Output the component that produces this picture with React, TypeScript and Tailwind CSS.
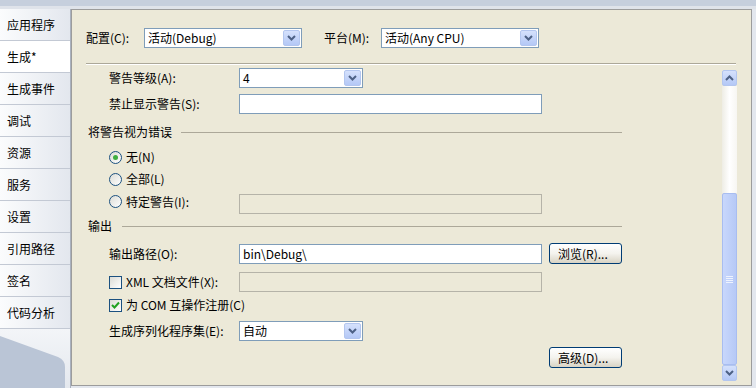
import React from 'react'

const font = { fontFamily: '"Noto Sans CJK SC", "Liberation Sans", sans-serif' }

const tabs = ['应用程序', '生成*', '生成事件', '调试', '资源', '服务', '设置', '引用路径', '签名', '代码分析']

function Chevron({ up = false }: { up?: boolean }) {
  return (
    <svg width="9" height="6" viewBox="0 0 9 6">
      <polyline
        points={up ? '1,5 4.5,1.5 8,5' : '1,1 4.5,4.5 8,1'}
        fill="none"
        stroke="#4d6185"
        strokeWidth="2"
      />
    </svg>
  )
}

function Combo({ value, width }: { value: string; width: string }) {
  return (
    <div className={`${width} h-[20px] flex items-center bg-white border border-[#7f9db9] pl-[3px] pr-[1px]`}>
      <span className="flex-1 text-[12px] leading-[16px] whitespace-nowrap">{value}</span>
      <div className="w-[17px] h-[16px] flex items-center justify-center rounded-[2px] border border-[#b3c6ef] bg-gradient-to-b from-[#d5e1fc] to-[#b4c8f6]">
        <Chevron />
      </div>
    </div>
  )
}

function TextBox({ value = '', disabled = false }: { value?: string; disabled?: boolean }) {
  return (
    <div
      className={
        'w-[303px] h-[20px] flex items-center pl-[3px] text-[12px] leading-[16px] border ' +
        (disabled ? 'bg-[#ece9d8] border-[#b5b3a8]' : 'bg-white border-[#7f9db9]')
      }
    >
      {value}
    </div>
  )
}

function XpButton({ label }: { label: string }) {
  return (
    <div className="w-[73px] h-[21px] flex items-center pl-[8px] text-[12px] leading-none rounded-[3px] border border-[#003c74] bg-gradient-to-b from-white via-[#f4f3ee] to-[#d8d3c4]">
      {label}
    </div>
  )
}

function Radio({ checked = false }: { checked?: boolean }) {
  return (
    <div className="w-[13px] h-[13px] rounded-full border border-[#1c5180] bg-gradient-to-br from-[#dcdcd6] to-white flex items-center justify-center">
      {checked && <div className="w-[5px] h-[5px] rounded-full bg-[#3fae3f]" />}
    </div>
  )
}

function Check({ checked = false }: { checked?: boolean }) {
  return (
    <div className="w-[13px] h-[13px] border border-[#1c5180] bg-gradient-to-br from-[#dcdcd6] to-white flex items-center justify-center">
      {checked && (
        <svg width="9" height="8" viewBox="0 0 9 8">
          <polyline points="1,4 3.5,6.5 8,1.5" fill="none" stroke="#21a121" strokeWidth="2" />
        </svg>
      )}
    </div>
  )
}

function Row({ label, children, mt }: { label: string; children: React.ReactNode; mt: string }) {
  return (
    <div className={`${mt} h-[20px] flex items-center pl-[23px]`}>
      <span className="w-[130px] text-[12px] leading-none">{label}</span>
      {children}
    </div>
  )
}

function GroupHeader({ label, mt, gap }: { label: string; mt: string; gap: string }) {
  return (
    <div className={`${mt} h-[20px] w-[536px] flex items-center pl-[2px]`}>
      <span className="text-[12px] leading-none">{label}</span>
      <div className={`flex-1 ${gap} border-t border-[#aca899]`} />
    </div>
  )
}

export default function App() {
  return (
    <div style={font} className="w-[756px] h-[388px] overflow-hidden flex flex-col bg-[#e3e7ee] text-black">
      {/* top strip */}
      <div className="h-[6px] shrink-0 bg-[#c6cfdd]" />
      <div className="h-[3px] shrink-0 bg-[#dfe3ea]" />

      <div className="flex flex-1 min-h-0">
        {/* side tabs */}
        <div className="w-[71px] shrink-0 flex flex-col border-r border-[#a9b1bf]">
          {tabs.map((t, i) => (
            <div
              key={t}
              className={
                'h-[32px] shrink-0 flex items-center pl-[7px] text-[12px] leading-none border-b border-[#c3c9d4] ' +
                (i === 1 ? 'bg-white' : 'bg-gradient-to-r from-[#fbfcfd] to-[#e3e7ee]')
              }
            >
              {t}
            </div>
          ))}
          <div className="flex-1 bg-gradient-to-b from-[#f3f5f8] to-[#e4e8ee]">
            <svg width="70" height="59" viewBox="0 0 70 59" className="block">
              <path d="M0,7 L58,28 Q65,31 65,38 L65,59 L0,59 Z" fill="#bac5d6" />
            </svg>
          </div>
        </div>

        {/* main panel */}
        <div className="w-[681px] h-[377px] shrink-0 border border-[#9c9c9c] bg-[#ece9d8] flex flex-col pl-[14px] pr-[14px]">
          <div className="mt-[18px] h-[20px] flex items-center">
            <span className="w-[58px] text-[12px] leading-none">配置(C):</span>
            <Combo value="活动(Debug)" width="w-[158px]" />
            <span className="ml-[22px] w-[57px] text-[12px] leading-none">平台(M):</span>
            <Combo value="活动(Any CPU)" width="w-[158px]" />
          </div>

          <div className="mt-[15px] w-[650px] border-t border-[#aca899] border-b border-b-white" />

          <div className="flex flex-1 min-h-0">
            <div className="flex-1 flex flex-col">
              <Row label="警告等级(A):" mt="mt-[3px]">
                <Combo value="4" width="w-[124px]" />
              </Row>
              <Row label="禁止显示警告(S):" mt="mt-[6px]">
                <TextBox />
              </Row>
              <GroupHeader label="将警告视为错误" mt="mt-[8px]" gap="ml-[9px]" />
              <div className="mt-[5px] h-[20px] flex items-center pl-[23px] gap-[4px]">
                <Radio checked />
                <span className="text-[12px] leading-none">无(N)</span>
              </div>
              <div className="mt-[2px] h-[20px] flex items-center pl-[23px] gap-[4px]">
                <Radio />
                <span className="text-[12px] leading-none">全部(L)</span>
              </div>
              <div className="mt-[5px] h-[20px] flex items-center pl-[23px]">
                <div className="w-[130px] flex items-center gap-[4px] -mt-[5px]">
                  <Radio />
                  <span className="text-[12px] leading-none">特定警告(I):</span>
                </div>
                <TextBox disabled />
              </div>
              <GroupHeader label="输出" mt="mt-[2px]" gap="ml-[10px]" />
              <div className="mt-[7px] h-[21px] flex items-center pl-[23px]">
                <span className="w-[130px] text-[12px] leading-none">输出路径(O):</span>
                <TextBox value="bin\Debug\" />
                <div className="ml-[7px]">
                  <XpButton label="浏览(R)..." />
                </div>
              </div>
              <div className="mt-[8px] h-[20px] flex items-center pl-[23px]">
                <div className="w-[130px] flex items-center gap-[4px]">
                  <Check />
                  <span className="text-[12px] leading-none">XML 文档文件(X):</span>
                </div>
                <TextBox disabled />
              </div>
              <div className="mt-[3px] h-[20px] flex items-center pl-[23px] gap-[4px]">
                <Check checked />
                <span className="text-[12px] leading-none">为 COM 互操作注册(C)</span>
              </div>
              <Row label="生成序列化程序集(E):" mt="mt-[6px]">
                <Combo value="自动" width="w-[124px]" />
              </Row>
              <div className="mt-[6px] h-[21px] flex items-center pl-[463px]">
                <XpButton label="高级(D)..." />
              </div>
            </div>

            {/* scrollbar */}
            <div className="w-[15px] mt-[5px] mb-[4px] flex flex-col">
              <div className="h-[16px] flex items-center justify-center rounded-[2px] border border-[#b3c6ef] bg-gradient-to-b from-[#d5e1fc] to-[#b4c8f6]">
                <Chevron up />
              </div>
              <div className="h-[107px] bg-gradient-to-r from-[#eeede5] via-white to-[#f7f6f2]" />
              <div className="flex-1 flex items-center justify-center rounded-[2px] border border-[#a8bdf0] bg-gradient-to-r from-[#c8d7fc] to-[#b6c9f6]">
                <div className="w-[7px] flex flex-col gap-[1px]">
                  <div className="h-[1px] bg-[#eef3fe]" />
                  <div className="h-[1px] bg-[#eef3fe]" />
                  <div className="h-[1px] bg-[#eef3fe]" />
                  <div className="h-[1px] bg-[#eef3fe]" />
                </div>
              </div>
              <div className="h-[16px] flex items-center justify-center rounded-[2px] border border-[#b3c6ef] bg-gradient-to-b from-[#d5e1fc] to-[#b4c8f6]">
                <Chevron />
              </div>
            </div>
          </div>
        </div>
      </div>
    </div>
  )
}
